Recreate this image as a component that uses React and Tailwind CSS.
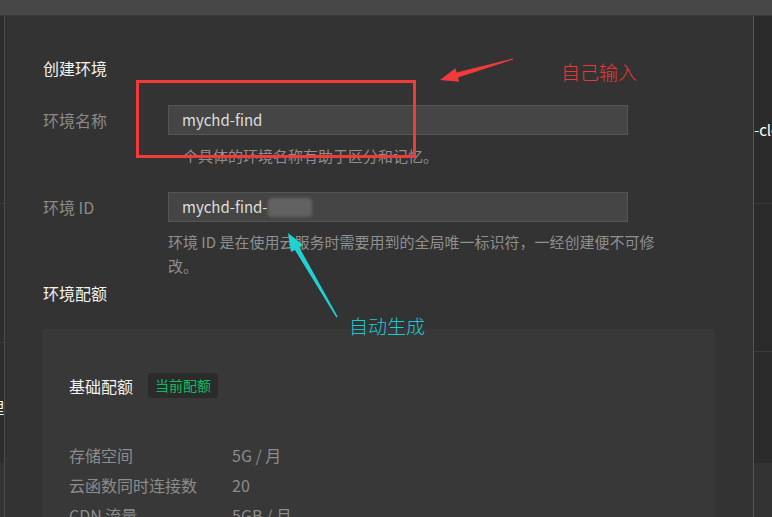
import React from 'react';

const font = { fontFamily: '"Noto Sans CJK SC", "Noto Sans", sans-serif' };

const quotas = [
  { name: '存储空间', value: '5G / 月' },
  { name: '云函数同时连接数', value: '20' },
  { name: 'CDN 流量', value: '5GB / 月' },
];

const Field = ({ label, children }) => (
  <div className="flex items-center">
    <div className="w-[125px] text-[16px] leading-6 text-[#8a8a8a]">{label}</div>
    <div className="w-[460px] h-[30px] flex items-center px-[13px] bg-[#454545] border border-[#555] text-[15px] text-[#dedede]">
      {children}
    </div>
  </div>
);

const Annotations = () => (
  <>
    <div className="absolute left-[136px] top-[80px] w-[280px] h-[78px] border-[3px] border-[#f23a3a]" />
    <svg className="absolute inset-0 pointer-events-none" width="772" height="517">
      <polygon
        fill="#f23a3a"
        points="440,80 459.2,81.7 458,77.4 513.1,59.5 512.9,58.5 456.6,72.6 455.4,68.3"
      />
      <polygon
        fill="#1ed2d6"
        points="288,233 303.1,245.1 299.3,247.3 337.6,316.6 336.4,317.4 294.9,249.9 291,252.1"
      />
    </svg>
    <div className="absolute left-[561px] top-[59px] text-[19px] leading-[26px] font-light text-[#f03636]">自己输入</div>
    <div className="absolute left-[349px] top-[313px] text-[19px] leading-[26px] font-light text-[#1ec9d2]">自动生成</div>
  </>
);

export default function App() {
  return (
    <div className="relative w-[772px] h-[517px] overflow-hidden flex flex-col bg-[#333]" style={font}>
      <div className="h-[16px] bg-[#474747] border-b border-[#3d3d3d]" />
      <div className="flex flex-1 min-h-0">
        {/* left side panel peeking out */}
        <div className="w-[4px] flex flex-col">
          <div className="h-[187px] bg-[#2d2d2d]" />
          <div className="h-[139px] bg-[#2d2d2d] border-t border-[#3a3a3a]" />
          <div className="h-[121px] bg-[#2d2d2d] border-t border-[#3a3a3a] flex justify-end overflow-hidden">
            <span className="mt-[54px] text-[16px] leading-5 text-white whitespace-nowrap">理</span>
          </div>
          <div className="flex-1 bg-[#333]" />
        </div>
        <div className="w-px bg-[#4b4b4b]" />

        <div className="flex-1 pl-[38px] pt-[40px]">
          <div className="text-[16px] leading-6 text-[#f2f2f2]">创建环境</div>

          <div className="mt-[25px]">
            <Field label="环境名称">mychd-find</Field>
          </div>
          <div className="ml-[125px] mt-[9px] text-[15px] leading-6 text-[#8f8f8f]">
            一个具体的环境名称有助于区分和记忆。
          </div>

          <div className="mt-[24px]">
            <Field label="环境 ID">
              <span>mychd-find-</span>
              <span className="inline-block w-[44px] h-[19px] bg-[#626262] blur-[1.5px] rounded-sm" />
            </Field>
          </div>
          <div className="ml-[125px] mt-[8px] w-[498px] text-[15px] leading-6 text-[#8f8f8f]">
            环境 ID 是在使用云服务时需要用到的全局唯一标识符，一经创建便不可修改。
          </div>

          <div className="mt-[3px] text-[16px] leading-6 text-[#f2f2f2]">环境配额</div>

          <div className="mt-[24px] -ml-px w-[673px] h-[300px] bg-[#383838] rounded-[4px] pl-[27px] pt-[44px]">
            <div className="flex items-center gap-[15px]">
              <span className="text-[16px] leading-6 text-[#f2f2f2]">基础配额</span>
              <span className="h-[25px] px-[7px] flex items-center rounded-[3px] bg-[#2b2b2b] text-[14px] text-[#07c160]">
                当前配额
              </span>
            </div>
            <div className="mt-[42px] flex flex-col">
              {quotas.map((q) => (
                <div key={q.name} className="flex h-[30px] items-center text-[16px] text-[#8c8c8c]">
                  <span className="w-[163px]">{q.name}</span>
                  <span>{q.value}</span>
                </div>
              ))}
            </div>
          </div>
        </div>

        <div className="w-px bg-[#555]" />
        {/* right side panel peeking out */}
        <div className="w-[18px] flex flex-col overflow-hidden">
          <div className="h-[187px] bg-[#2b2b2b]">
            <div className="mt-[104px] text-[15px] leading-5 text-white whitespace-nowrap">-cloud</div>
          </div>
          <div className="h-[148px] bg-[#2b2b2b] border-t border-[#3a3a3a]" />
          <div className="h-[112px] bg-[#2b2b2b] border-t border-[#3a3a3a]" />
          <div className="flex-1 bg-[#333]" />
        </div>
      </div>
      <Annotations />
    </div>
  );
}
